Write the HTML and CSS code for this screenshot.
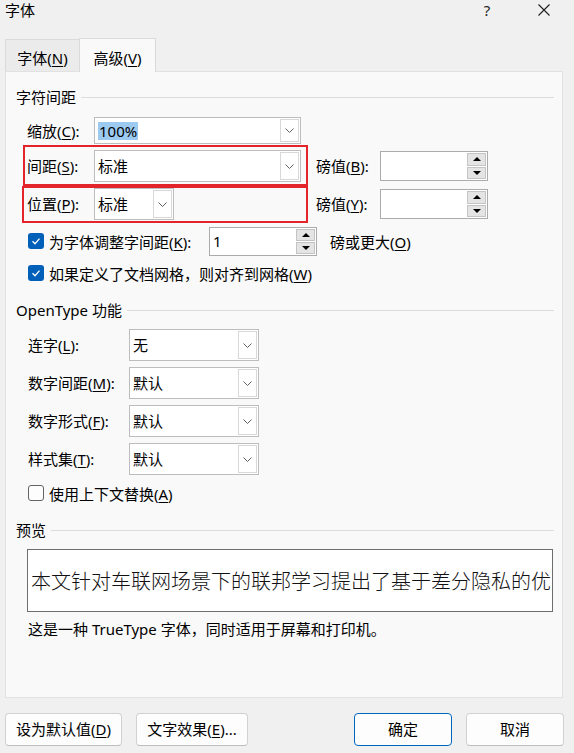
FILE: index.html
```html
<!DOCTYPE html>
<html lang="zh-CN">
<head>
<meta charset="utf-8">
<title>字体</title>
<link rel="stylesheet" href="styles.css">
</head>
<body>
<div class="dialog">
  <div class="titlebar">
    <span class="title">字体</span>
    <span class="help">?</span>
    <span class="close"><svg width="12" height="12" viewBox="0 0 12 12"><path d="M0.5 0.5 L11.5 11.5 M11.5 0.5 L0.5 11.5" stroke="#1f1f1f" stroke-width="1.1" fill="none"/></svg></span>
  </div>

  <div class="tabs">
    <div class="tab">字体(<u>N</u>)</div>
    <div class="tab active">高级(<u>V</u>)</div>
  </div>

  <div class="panel">
    <div class="heading h-first"><span>字符间距</span><i></i></div>

    <div class="row r-scale">
      <span class="lbl l67">缩放(<u>C</u>):</span>
      <div class="combo edit w207">
        <span class="val"><span class="sel">100%</span></span>
        <span class="arr"><svg width="9" height="5" viewBox="0 0 9 5"><polyline points="0.5,0.5 4.5,4.5 8.5,0.5" fill="none" stroke="#606060" stroke-width="1"/></svg></span>
      </div>
    </div>

    <div class="row r-spacing">
      <div class="mark mark-b">
        <span class="lbl l67 lh32">间距(<u>S</u>):</span>
        <div class="combo w207">
          <span class="val">标准</span>
          <span class="arr"><svg width="9" height="5" viewBox="0 0 9 5"><polyline points="0.5,0.5 4.5,4.5 8.5,0.5" fill="none" stroke="#606060" stroke-width="1"/></svg></span>
        </div>
      </div>
      <span class="lbl pt pt-b">磅值(<u>B</u>):</span>
      <div class="spin spin-b">
        <span class="sval"></span>
        <span class="sbtns"><b><i class="up"></i></b><b><i class="down"></i></b></span>
      </div>
    </div>

    <div class="row r-position">
      <div class="mark mark-c">
        <span class="lbl l67 lh32">位置(<u>P</u>):</span>
        <div class="combo w80">
          <span class="val">标准</span>
          <span class="arr"><svg width="9" height="5" viewBox="0 0 9 5"><polyline points="0.5,0.5 4.5,4.5 8.5,0.5" fill="none" stroke="#606060" stroke-width="1"/></svg></span>
        </div>
      </div>
      <span class="lbl pt pt-c">磅值(<u>Y</u>):</span>
      <div class="spin spin-c">
        <span class="sval"></span>
        <span class="sbtns"><b><i class="up"></i></b><b><i class="down"></i></b></span>
      </div>
    </div>

    <div class="row r-kern">
      <span class="cb on"><svg width="16" height="16" viewBox="0 0 16 16"><polyline points="4.5,8.2 7,10.7 11.5,5.6" fill="none" stroke="#fff" stroke-width="1.3"/></svg></span>
      <span class="kern-text">为字体调整字间距(<u>K</u>):</span>
      <div class="spin spin-k">
        <span class="sval">1</span>
        <span class="sbtns"><b><i class="up"></i></b><b><i class="down"></i></b></span>
      </div>
      <span class="kern-after">磅或更大(<u>O</u>)</span>
    </div>

    <div class="row r-grid">
      <span class="cb on"><svg width="16" height="16" viewBox="0 0 16 16"><polyline points="4.5,8.2 7,10.7 11.5,5.6" fill="none" stroke="#fff" stroke-width="1.3"/></svg></span>
      <span>如果定义了文档网格，则对齐到网格(<u>W</u>)</span>
    </div>

    <div class="heading h-next"><span>OpenType 功能</span><i></i></div>

    <div class="ot-list">
      <div class="row ot-row">
        <span class="lbl l101">连字(<u>L</u>):</span>
        <div class="combo w130">
          <span class="val">无</span>
          <span class="arr"><svg width="9" height="5" viewBox="0 0 9 5"><polyline points="0.5,0.5 4.5,4.5 8.5,0.5" fill="none" stroke="#606060" stroke-width="1"/></svg></span>
        </div>
      </div>
      <div class="row ot-row">
        <span class="lbl l101">数字间距(<u>M</u>):</span>
        <div class="combo w130">
          <span class="val">默认</span>
          <span class="arr"><svg width="9" height="5" viewBox="0 0 9 5"><polyline points="0.5,0.5 4.5,4.5 8.5,0.5" fill="none" stroke="#606060" stroke-width="1"/></svg></span>
        </div>
      </div>
      <div class="row ot-row">
        <span class="lbl l101">数字形式(<u>F</u>):</span>
        <div class="combo w130">
          <span class="val">默认</span>
          <span class="arr"><svg width="9" height="5" viewBox="0 0 9 5"><polyline points="0.5,0.5 4.5,4.5 8.5,0.5" fill="none" stroke="#606060" stroke-width="1"/></svg></span>
        </div>
      </div>
      <div class="row ot-row">
        <span class="lbl l101">样式集(<u>T</u>):</span>
        <div class="combo w130">
          <span class="val">默认</span>
          <span class="arr"><svg width="9" height="5" viewBox="0 0 9 5"><polyline points="0.5,0.5 4.5,4.5 8.5,0.5" fill="none" stroke="#606060" stroke-width="1"/></svg></span>
        </div>
      </div>
    </div>

    <div class="row r-ctx">
      <span class="cb off"></span>
      <span>使用上下文替换(<u>A</u>)</span>
    </div>

    <div class="heading h-next"><span>预览</span><i></i></div>

    <div class="preview"><span>本文针对车联网场景下的联邦学习提出了基于差分隐私的优</span></div>

    <div class="info">这是一种 TrueType 字体，同时适用于屏幕和打印机。</div>
  </div>

  <div class="footer">
    <span class="btn b-default">设为默认值(<u>D</u>)</span>
    <span class="btn b-effect">文字效果(<u>E</u>)...</span>
    <span class="btn b-ok">确定</span>
    <span class="btn b-cancel">取消</span>
  </div>
</div>
</body>
</html>
```

FILE: styles.css
```css
* { box-sizing: border-box; }
html, body { margin: 0; padding: 0; }
body {
  background: #f0f0f0;
  font-family: "Noto Sans", "Noto Sans CJK SC", sans-serif;
  font-size: 15px;
  color: #000;
  width: 574px;
  height: 753px;
  overflow: hidden;
}
u { text-decoration: underline; text-decoration-thickness: 1px; text-underline-offset: 2px; }

.dialog { width: 574px; height: 753px; display: flex; flex-direction: column; }

/* title bar */
.titlebar { height: 38px; display: flex; align-items: flex-start; padding: 0 24px 0 5px; flex: none; }
.titlebar > span { height: 20px; line-height: 20px; }
.title { flex: 1; }
.help { width: 10px; text-align: center; color: #222; }
.close { width: 12px; margin-left: 46px; display: flex; align-items: center; }

/* tabs */
.tabs { display: flex; align-items: flex-end; height: 33px; padding-left: 5px; flex: none; }
.tab {
  width: 74px; height: 32px; padding-top: 8px; line-height: 20px; text-align: center;
  background: #ebebeb; border: 1px solid #dadada; border-bottom: none; border-right: none;
}
.tab.active {
  width: 77px; height: 34px; padding-top: 9px; background: #f9f9f9;
  border: 1px solid #dadada; border-bottom: none; margin-bottom: -1px;
  position: relative; z-index: 1;
}

/* panel */
.panel {
  margin-left: 5px; width: 558px; height: 627px; flex: none;
  background: #f9f9f9; border: 1px solid #e1e1e1;
  padding: 0 8px 0 10px; display: flex; flex-direction: column;
}
.heading { display: flex; align-items: center; height: 20px; line-height: 20px; flex: none; }
.heading i { flex: 1; height: 1px; background: #dcdcdc; margin-left: 5px; }
.h-first { margin-top: 15px; }
.h-next { margin-top: 17px; }

.row { display: flex; align-items: center; flex: none; }
.lbl { flex: none; line-height: 20px; white-space: nowrap; }
.l67 { width: 67px; }
.l101 { width: 101px; }
.lh32 { line-height: 32px; }

/* combo */
.combo {
  display: flex; height: 32px; background: #fff; border: 1px solid #bdbdbd; flex: none;
}
.combo .val { flex: 1; padding-left: 3px; line-height: 30px; white-space: nowrap; overflow: hidden; }
.combo .arr {
  width: 19px; margin: 1px; border: 1px solid #d8d8d8; background: #fff;
  display: flex; align-items: center; justify-content: center;
}
.combo.edit { height: 27px; }
.combo.edit .val { line-height: 25px; display: flex; align-items: center; }
.sel { background: #9dcaf0; line-height: 18px; height: 18px; padding: 0 1px; }
.w207 { width: 207px; }
.w80 { width: 80px; }
.w130 { width: 130px; }

/* rows of section 1 */
.r-scale { margin-top: 10px; padding-left: 11px; height: 27px; }
.r-spacing { margin-left: 7px; margin-top: 1px; align-items: flex-start; }
.r-position { margin-left: 6px; align-items: flex-start; }

.mark { border: 2px solid #e3242b; display: flex; align-items: flex-start; flex: none; }
.mark-b { width: 285px; height: 41px; padding: 3px 0 0 2px; }
.mark-c { width: 286px; height: 37px; padding: 0 0 0 3px; }

.pt { width: 64px; margin-left: 8px; line-height: 30px; }
.pt-b { margin-top: 6px; }
.pt-c { margin-top: 3px; }

.spin { display: flex; width: 108px; height: 30px; background: #fff; border: 1px solid #ababab; flex: none; }
.spin .sval { flex: 1; padding-left: 3px; line-height: 26px; }
.sbtns { width: 19px; margin: 1px; display: flex; flex-direction: column; gap: 1px; }
.sbtns b {
  flex: 1; background: #e4e4e4; border: 1px solid #c4c4c4;
  display: flex; align-items: center; justify-content: center;
}
.up { width: 0; height: 0; border-left: 4px solid transparent; border-right: 4px solid transparent; border-bottom: 4px solid #000; }
.down { width: 0; height: 0; border-left: 4px solid transparent; border-right: 4px solid transparent; border-top: 4px solid #000; }
.spin-b { margin-top: 6px; }
.spin-c { margin-top: 3px; }

/* checkboxes */
.cb { width: 16px; height: 16px; border-radius: 3px; margin-right: 5px; flex: none; display: block; }
.cb svg { display: block; }
.cb.on { background: #005fb8; }
.cb.off { background: #fdfdfd; border: 1px solid #636363; }

.r-kern { margin-top: 3px; height: 30px; padding-left: 12px; }
.kern-text { width: 160px; flex: none; white-space: nowrap; }
.spin-k { height: 29px; }
.kern-after { margin-left: 13px; white-space: nowrap; }
.r-grid { margin-top: 7px; height: 20px; padding-left: 12px; }

/* OpenType */
.ot-list { display: flex; flex-direction: column; gap: 6px; margin-top: 9px; padding-left: 12px; flex: none; }
.ot-row { height: 32px; }
.r-ctx { margin-top: 8px; height: 20px; padding-left: 12px; }

/* preview */
.preview {
  margin-top: 9px; margin-left: 11px; width: 526px; height: 63px; flex: none;
  background: #fff; border: 1px solid #6e6e6e; padding-left: 3px;
  display: flex; align-items: center; overflow: hidden; white-space: nowrap;
  font-family: "Noto Sans CJK SC", serif; font-size: 20px; font-weight: 300; color: #111;
}
.info { margin-top: 7px; padding-left: 12px; line-height: 20px; height: 20px; flex: none; white-space: nowrap; }

/* footer */
.footer { display: flex; margin-top: 15px; height: 33px; padding: 0 10px 0 5px; flex: none; }
.btn {
  height: 33px; line-height: 31px; text-align: center; background: #fdfdfd;
  border: 1px solid #d1d1d1; border-bottom-color: #bebebe; border-radius: 4px; white-space: nowrap;
}
.b-default { width: 117px; }
.b-effect { width: 112px; margin-left: 14px; }
.b-ok { width: 98px; margin-left: auto; border-color: #0067c0; }
.b-cancel { width: 98px; margin-left: 14px; }
```
